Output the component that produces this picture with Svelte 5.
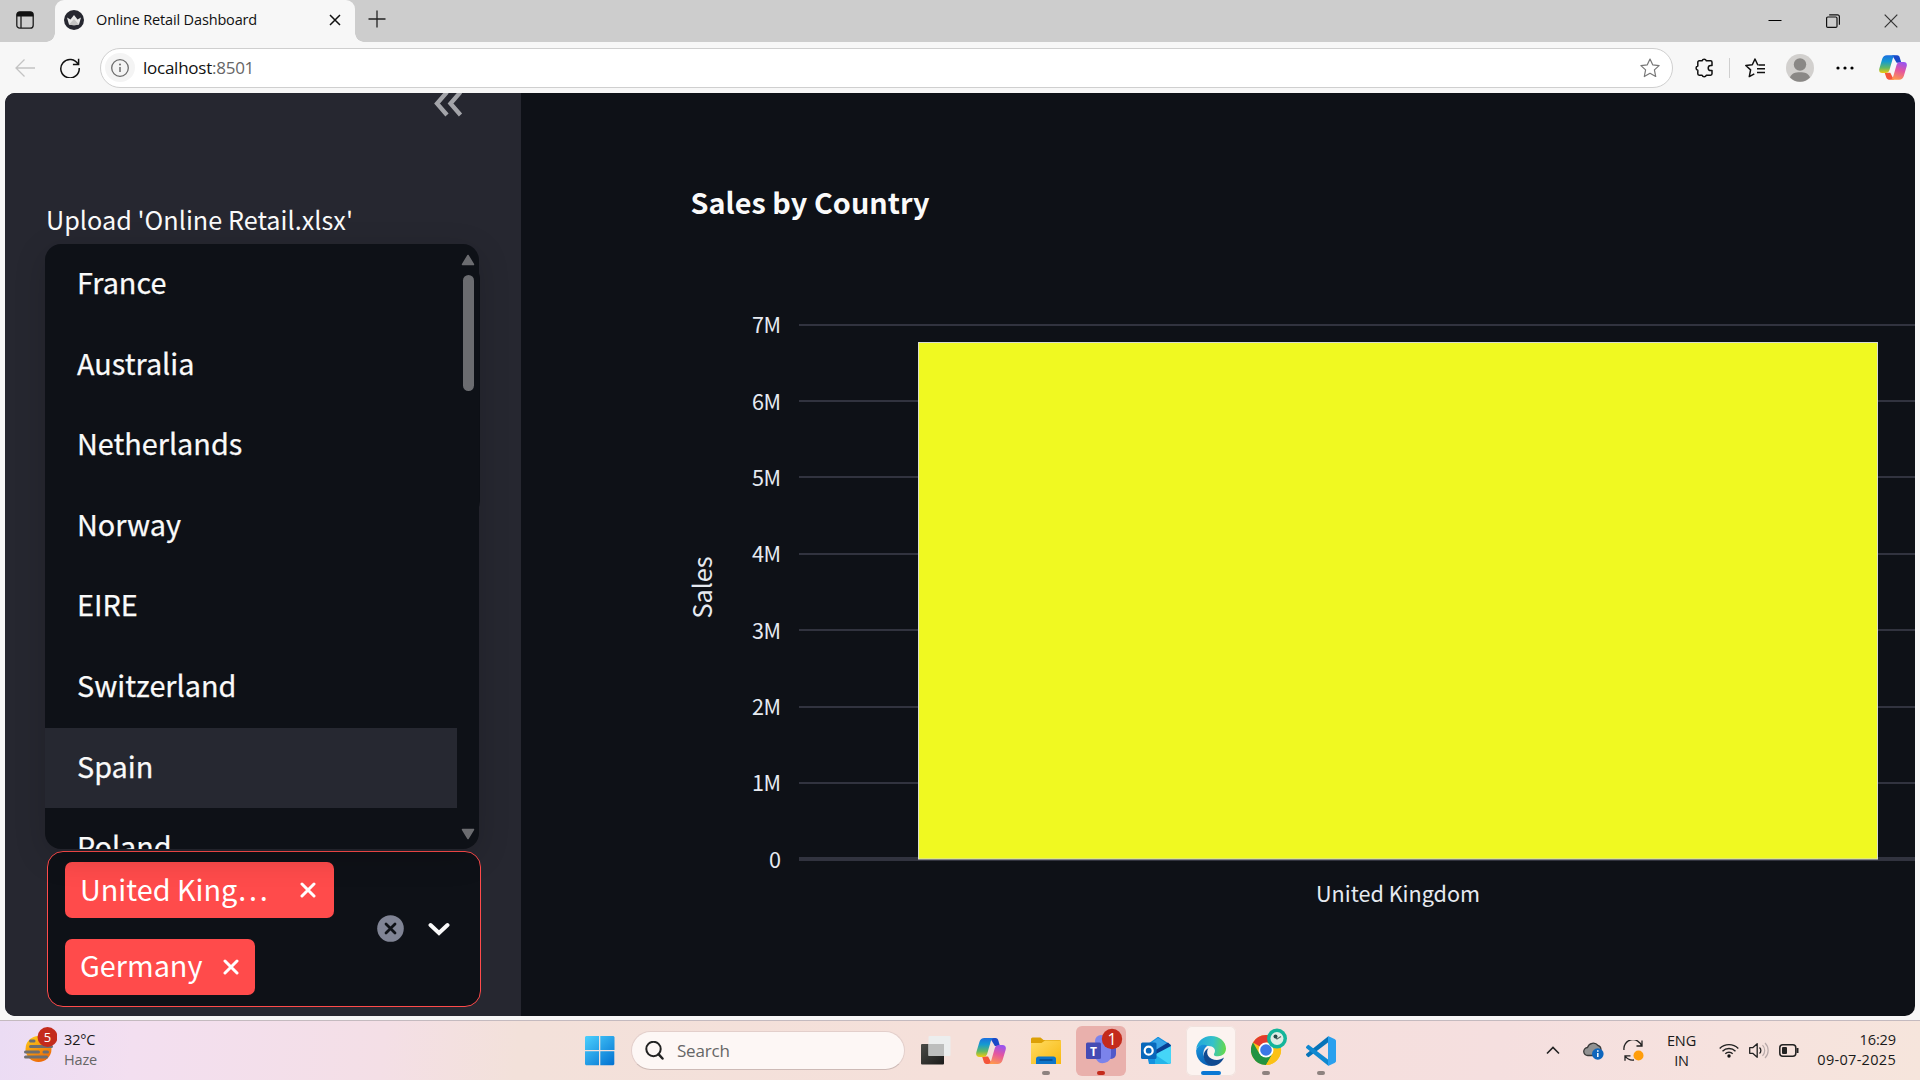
<script>
  const countries = ['France', 'Australia', 'Netherlands', 'Norway', 'EIRE', 'Switzerland', 'Spain', 'Poland'];
  const selected = [
    { name: 'United King…', wide: true },
    { name: 'Germany', wide: false }
  ];
  const ticks = [
    { label: '7M', y: 232, base: 240 },
    { label: '6M', y: 308, base: 317 },
    { label: '5M', y: 384, base: 393 },
    { label: '4M', y: 461, base: 469 },
    { label: '3M', y: 537, base: 546 },
    { label: '2M', y: 614, base: 622 },
    { label: '1M', y: 690, base: 698 }
  ];
</script>

{#snippet copilot(id)}
  <svg class="copilot" viewBox="0 0 30 28">
    <defs>
      <linearGradient id="{id}a" x1="0" y1="0" x2="0" y2="1">
        <stop offset="0" stop-color="#1b6fe0" /><stop offset=".35" stop-color="#159bd0" />
        <stop offset=".7" stop-color="#62b865" /><stop offset="1" stop-color="#f3cb0e" />
      </linearGradient>
      <linearGradient id="{id}b" x1=".6" y1="0" x2=".3" y2="1">
        <stop offset="0" stop-color="#9a55ee" /><stop offset=".45" stop-color="#e455a0" />
        <stop offset="1" stop-color="#ff9a4c" />
      </linearGradient>
    </defs>
    <path d="M14 1h5.500c1.600 0 2.400 1 2.900 2.700l1.500 5.300h-5z" fill="#1a49c8" />
    <path d="M16 27h-5.500c-1.600 0-2.400-1-2.900-2.700l-1.500-4.800h6z" fill="#f4553a" />
    <path d="M8.500 1h9.500c-2 .5-2.800 2-3.400 4l-3.300 11.500c-.7 2.500-2 3.500-4.500 3.500h-3.300c-3 0-3.900-2.300-3.100-5l3-10c.8-2.600 2.400-4 5.100-4z" fill="url(#{id}a)" />
    <path d="M21.500 27h-9.500c2-.5 2.800-2 3.400-4l3.300-11.500c.7-2.500 2-3.500 4.500-3.500h3.300c3 0 3.900 2.300 3.100 5l-3 10c-.8 2.600-2.400 4-5.100 4z" fill="url(#{id}b)" />
  </svg>
{/snippet}

<div class="screen">
  <header class="titlebar">
    <div class="workspace">
      <svg width="18" height="18" viewBox="0 0 18 18">
        <rect x=".8" y=".8" width="16.400" height="16.400" rx="3" fill="none" stroke="#1b1b1b" stroke-width="1.300" />
        <path d="M.8 5.500V4a3.200 3.200 0 0 1 3.200-3.200h10A3.200 3.200 0 0 1 17.200 4v1.500z" fill="#111" />
        <path d="M5 5v12" stroke="#1b1b1b" stroke-width="1.300" />
      </svg>
    </div>
    <div class="tab">
      <svg class="favicon" width="20" height="20" viewBox="0 0 20 20">
        <circle cx="10" cy="10" r="10" fill="#262730" />
        <path d="M3 7.500l3.500 2L10 5l3.500 4.500 3.500-2-2 7c-3 1-7 1-10 0z" fill="#e8e8e8" />
        <path d="M5 14.500L10 9l5 5.500c-3 1-7 1-10 0z" fill="#c4c4c4" />
      </svg>
      <span class="tab-title">Online Retail Dashboard</span>
      <svg width="12" height="12" viewBox="0 0 12 12"><path d="M1 1l10 10M11 1L1 11" stroke="#111" stroke-width="1.500" /></svg>
    </div>
    <svg class="new-tab" width="18" height="18" viewBox="0 0 18 18"><path d="M9 .5v17M.5 9h17" stroke="#222" stroke-width="1.300" /></svg>
    <div class="window-buttons">
      <svg width="14" height="14" viewBox="0 0 14 14"><path d="M.5 6.500h13" stroke="#000" stroke-width="1" /></svg>
      <svg width="14" height="14" viewBox="0 0 14 14"><g fill="none" stroke="#111" stroke-width="1.200"><rect x=".6" y="3" width="10.400" height="10.400" rx="1.200" /><path d="M3.200 .8h8.300a1.900 1.900 0 0 1 1.900 1.900v8" /></g></svg>
      <svg width="14" height="14" viewBox="0 0 14 14"><path d="M.7 .7l12.600 12.600M13.300 .7L.7 13.300" stroke="#333" stroke-width="1.200" /></svg>
    </div>
  </header>

  <nav class="toolbar">
    <svg class="back" width="20" height="20" viewBox="0 0 20 20"><path d="M20 10H1M9.500 1.500L1 10l8.500 8.500" fill="none" stroke="#c3c3c3" stroke-width="1.300" /></svg>
    <svg class="reload" width="20" height="20" viewBox="0 0 20 20"><path d="M18.200 6.500A9.200 9.200 0 1 0 19.200 10M18.600 .8v5.700h-5.700" fill="none" stroke="#111" stroke-width="1.500" /></svg>
    <div class="address">
      <div class="site-info">
        <svg width="18" height="18" viewBox="0 0 18 18"><circle cx="9" cy="9" r="8.300" fill="none" stroke="#6c6c6c" stroke-width="1.300" /><path d="M9 8v5" stroke="#6c6c6c" stroke-width="1.500" /><circle cx="9" cy="5.400" r="1" fill="#6c6c6c" /></svg>
      </div>
      <span class="url">localhost<i>:8501</i></span>
      <svg class="star" width="20" height="20" viewBox="0 0 20 20"><path d="M10 1l2.700 5.800 6.400.8-4.700 4.300 1.300 6.600L10 15.300l-5.700 3.200 1.300-6.600L.9 7.600l6.400-.8z" fill="none" stroke="#777" stroke-width="1.200" stroke-linejoin="round" /></svg>
    </div>
    <div class="actions">
      <svg class="puzzle" width="20" height="20" viewBox="0 0 20 20"><path d="M5.200 2.800h2.900a2.200 2.200 0 0 1 4.200 0h4.300a1.400 1.400 0 0 1 1.400 1.400v3.200h-1.200a2.600 2.600 0 0 0 0 5.200h1.200v3.200a1.400 1.400 0 0 1-1.400 1.400h-4.300a2.200 2.200 0 0 1-4.200 0H5.200a1.400 1.400 0 0 1-1.400-1.400v-3.600a2.200 2.200 0 0 1 0-4.300V4.200a1.400 1.400 0 0 1 1.400-1.400z" fill="none" stroke="#111" stroke-width="1.500" stroke-linejoin="round" /></svg>
      <span class="divider"></span>
      <svg class="favorites" width="20" height="20" viewBox="0 0 20 20"><path d="M13.300 6.800l-.6-.1L10 1 7.300 6.700l-6.500.8 4.800 4.400-1.300 6.700 5-2.700M13.500 7H20M12 10.800h8M12 14.500h8" fill="none" stroke="#111" stroke-width="1.500" stroke-linejoin="round" /></svg>
      <svg class="avatar" width="28" height="28" viewBox="0 0 28 28"><circle cx="14" cy="14" r="14" fill="#d2d0ce" /><circle cx="14" cy="10.500" r="6.200" fill="#8a8886" /><path d="M4 23.500C5.500 19.500 9 18.300 14 18.300s8.500 1.200 10 5.200A14 14 0 0 1 4 23.500z" fill="#8a8886" /></svg>
      <svg class="more" width="18" height="4" viewBox="0 0 18 4"><circle cx="2" cy="2" r="1.600" /><circle cx="9" cy="2" r="1.600" /><circle cx="16" cy="2" r="1.600" /></svg>
      {@render copilot('bar')}
    </div>
  </nav>

  <main class="viewport">
    <aside class="sidebar">
      <svg class="collapse" width="29" height="24" viewBox="0 0 29 24"><path d="M13 -1L3 10.500 13 22M26.500 -1L16.500 10.500 26.500 22" fill="none" stroke="#a3a4a9" stroke-width="4.300" /></svg>
      <p class="upload-label">Upload 'Online Retail.xlsx'</p>
      <div class="uploader">
        <div class="menu">
          <ul>
            {#each countries as country}
              <li class:hovered={country === 'Spain'}>{country}</li>
            {/each}
          </ul>
          <div class="scrollbar">
            <svg width="14" height="12" viewBox="0 0 14 12"><path d="M7 1.500L12.500 10.500h-11z" fill="#6b6c70" stroke="#6b6c70" stroke-width="1.500" stroke-linejoin="round" /></svg>
            <span class="thumb"></span>
            <svg class="down" width="14" height="12" viewBox="0 0 14 12"><path d="M7 10.500L12.500 1.500h-11z" fill="#6b6c70" stroke="#6b6c70" stroke-width="1.500" stroke-linejoin="round" /></svg>
          </div>
        </div>
      </div>
      <div class="multiselect">
        <div class="tags">
          {#each selected as tag}
            <span class="tag" class:wide={tag.wide}>
              <span>{tag.name}</span>
              <svg width="16" height="16" viewBox="0 0 16 16"><path d="M2 2l12 12M14 2L2 14" stroke="#fff" stroke-width="3" stroke-linecap="round" /></svg>
            </span>
          {/each}
        </div>
        <svg class="clear" width="27" height="27" viewBox="0 0 27 27"><circle cx="13.500" cy="13.500" r="13.300" fill="#808495" /><path d="M9 9l9 9M18 9l-9 9" stroke="#0e1117" stroke-width="2.800" stroke-linecap="round" /></svg>
        <svg class="chevron" width="22" height="14" viewBox="0 0 22 14"><path d="M2.500 3L11 11l8.500-8" fill="none" stroke="#fafafa" stroke-width="4" stroke-linecap="round" /></svg>
      </div>
    </aside>

    <section class="chart">
      <svg width="1394" height="923" viewBox="0 0 1394 923">
        <text class="title" x="169.500" y="121" textLength="239">Sales by Country</text>
        {#each ticks as tick}
          <text class="tick" x="260" y={tick.base} text-anchor="end" textLength="29">{tick.label}</text>
          <rect x="278" y={tick.y - 1} width="1116" height="2" fill="#31333f" />
        {/each}
        <text class="tick" x="260" y="775" text-anchor="end">0</text>
        <rect x="278" y="764" width="1116" height="4" fill="#31333f" />
        <rect x="397.500" y="249.500" width="959" height="516.500" fill="#f0f921" stroke="#d9dccf" stroke-width="1" />
        <text class="axis" transform="translate(190.500 525.500) rotate(-90)" textLength="62">Sales</text>
        <text class="tick" x="795" y="809" textLength="164">United Kingdom</text>
      </svg>
    </section>
  </main>

  <footer class="taskbar">
    <div class="weather">
      <svg width="34" height="38" viewBox="0 0 34 38">
        <defs><linearGradient id="sun" x1="0" y1="0" x2=".5" y2="1"><stop offset="0" stop-color="#ffd21a" /><stop offset="1" stop-color="#ee6c08" /></linearGradient></defs>
        <circle cx="15.500" cy="22" r="13" fill="url(#sun)" />
        <path d="M7.500 14h3.500M7.500 19.500h21M2.500 25h13M21 25h3.500M2.500 30h21" stroke="#6e6e70" stroke-width="3" stroke-linecap="round" />
        <circle cx="24.500" cy="10" r="10" fill="#c42b1c" />
        <text x="24.500" y="14.700" text-anchor="middle" class="badge">5</text>
      </svg>
      <div class="weather-text"><span>32°C</span><span class="muted">Haze</span></div>
    </div>

    <div class="apps">
      <svg class="start" width="30" height="30" viewBox="0 0 30 30">
        <defs><linearGradient id="win" gradientUnits="userSpaceOnUse" x1="0" y1="0" x2="26" y2="30"><stop offset="0" stop-color="#4cd0fd" /><stop offset="1" stop-color="#0474d2" /></linearGradient></defs>
        <path d="M1 0h13v14H0V1zM15.300 0H28.500l1 1v13H15.300zM0 15.300h14v14H1l-1-1zM15.300 15.300h14v13l-1 1h-13z" fill="url(#win)" />
      </svg>
      <div class="search">
        <svg width="19" height="19" viewBox="0 0 19 19"><circle cx="8.500" cy="8" r="7.200" fill="none" stroke="#222" stroke-width="2" /><path d="M13.500 13.200l4 4.300" stroke="#222" stroke-width="2.500" stroke-linecap="round" /></svg>
        <span>Search</span>
      </div>
      <div class="icons">
        <div class="app">
          <svg width="30" height="30" viewBox="0 0 30 30">
            <defs><linearGradient id="tv" x1="0" y1="0" x2="1" y2="1"><stop offset="0" stop-color="#4b4b46" /><stop offset="1" stop-color="#1b1b1a" /></linearGradient></defs>
            <rect x="0" y="8" width="23" height="20.500" rx="1" fill="url(#tv)" /><rect x="7.500" y="0" width="22" height="20" rx="1" fill="#eceeee" /><path d="M7.500 8H23v12H7.500z" fill="#bdbebd" />
          </svg>
        </div>
        <div class="app">{@render copilot('task')}</div>
        <div class="app running">
          <svg width="30" height="28" viewBox="0 0 30 28">
            <defs><linearGradient id="fold" x1="0" y1="0" x2="1" y2="1"><stop offset="0" stop-color="#ffdc62" /><stop offset="1" stop-color="#f8b80f" /></linearGradient></defs>
            <path d="M0 2a1.500 1.500 0 0 1 1.500-1.500h8L12.500 3H28.500A1.500 1.500 0 0 1 30 4.500V12H0z" fill="#dca006" />
            <path d="M0 6h10.500L14 3.500h16V27H0z" fill="url(#fold)" />
            <path d="M5 27v-5a2.500 2.500 0 0 1 2.500-2.500h15A2.500 2.500 0 0 1 25 22v5z" fill="#0d75c9" /><path d="M8.500 23h13" stroke="#064a8b" stroke-width="1.500" />
          </svg>
        </div>
        <div class="app running alert">
          <svg class="teams" width="38" height="38" viewBox="0 0 38 38">
            <circle cx="16" cy="13" r="6" fill="#7b83eb" /><rect x="21" y="15" width="10" height="16" rx="5" fill="#5059c9" />
            <path d="M10 15h16v12a8 8 0 0 1-15 4z" fill="#7b83eb" /><rect x="1" y="14.500" width="15" height="16.500" rx="1.500" fill="#454bb4" />
            <text x="8.500" y="27.500" text-anchor="middle" class="teams-letter">T</text>
            <circle cx="27" cy="11" r="10.200" fill="#c42b1c" /><text x="27" y="16.500" text-anchor="middle" class="badge one">1</text>
          </svg>
        </div>
        <div class="app">
          <svg width="30" height="28" viewBox="0 0 30 28">
            <path d="M4 9L16 .5c.8-.6 1.500-.6 2.300 0L30 8v17a2 2 0 0 1-2 2H8z" fill="#1491df" />
            <path d="M8 8L17 1l11 7-9 6z" fill="#38a5e8" /><path d="M13 14L27 5.500l3 3V11l-15 9z" fill="#093e92" />
            <path d="M14 17.500l16-8.500v15.500a2.500 2.500 0 0 1-2.500 2.500H14z" fill="#45d5f7" /><path d="M14 17.500L28 27H14z" fill="#24b5ea" />
            <rect x="0" y="5.500" width="15.500" height="16.500" rx="1.500" fill="#0868bb" /><circle cx="7.700" cy="13.700" r="4" fill="none" stroke="#fff" stroke-width="2.200" />
          </svg>
        </div>
        <div class="app running active">
          <svg width="30" height="30" viewBox="0 0 30 30">
            <defs>
              <linearGradient id="e1" x1="0" y1=".4" x2="1" y2=".5"><stop offset="0" stop-color="#20a6dd" /><stop offset=".55" stop-color="#35c1ca" /><stop offset="1" stop-color="#65d94b" /></linearGradient>
              <linearGradient id="e2" x1="0" y1="0" x2=".4" y2="1"><stop offset="0" stop-color="#1a9ae0" /><stop offset="1" stop-color="#0a5fb4" /></linearGradient>
            </defs>
            <path d="M.2 13.500C1 5.500 7.200 0 15 0c8.800 0 15 6 15 12.600 0 5-3.900 7.700-7.900 7.700-3.200 0-4.800-1.100-4.100-2.400 3-4.500-1-7.900-5.500-7.900C7.500 8.500 2 9.500.2 13.500z" fill="url(#e1)" />
            <path d="M.1 14.500C1.500 9 7 7.500 12 9.500c-3 1.500-5 5-4.500 9 .6 5 4.500 10 10.500 11.200C8.500 31 0 24.500.1 14.500z" fill="url(#e2)" />
            <path d="M12.500 12c-2.500 3.500-1.500 8.500 3 10.700 4.500 2.100 8.800 1.500 12.500-1.200-2 5-7 8.800-12.500 8.300C6.500 27 5 15.500 12.500 12z" fill="#104a91" />
          </svg>
        </div>
        <div class="app running">
          <svg class="chrome" width="38" height="38" viewBox="0 0 38 38">
            <circle cx="15" cy="22" r="15" fill="#fbc116" />
            <path d="M15 22L2 14.500a15 15 0 0 1 26 0L15 14.500z" fill="#e33b2e" />
            <path d="M2 14.500A15 15 0 0 0 15 37l6.500-11.200L15 22l-6.500 3.800z" fill="#229342" />
            <path d="M28 14.500A15 15 0 0 1 15 37l6.500-11.200c1.500-3 1-8-2-11.300z" fill="#fbc116" />
            <circle cx="15" cy="22" r="7.500" fill="#fff" /><circle cx="15" cy="22" r="5.800" fill="#3b78e7" />
            <circle cx="26" cy="10.500" r="10" fill="#13b59a" /><circle cx="26" cy="10.500" r="6.500" fill="#dfece5" /><path d="M23.500 8l2.500 3 4-2.500" fill="none" stroke="#5a6b69" stroke-width="1.300" /><circle cx="24.500" cy="8.500" r="2" fill="#274b49" />
          </svg>
        </div>
        <div class="app running">
          <svg width="30" height="30" viewBox="0 0 30 30">
            <path d="M22 6.500L3.200 20.800a1.200 1.200 0 0 1-1.600 0L.4 19.600a1.200 1.200 0 0 1 0-1.800L22 .5z" fill="#0673b8" />
            <path d="M22 23.500L3.200 9.200a1.200 1.200 0 0 0-1.600 0L.4 10.400a1.200 1.200 0 0 0 0 1.800L22 29.500z" fill="#0f88d0" />
            <path d="M22 0l6.500 3c1 .5 1.500 1.200 1.500 2.200v19.600c0 1-.5 1.700-1.500 2.200l-6.500 3z" fill="#2aa0ee" />
          </svg>
        </div>
      </div>
    </div>

    <div class="tray">
      <svg class="up" width="14" height="9" viewBox="0 0 14 9"><path d="M1 7.500l6-6 6 6" fill="none" stroke="#222" stroke-width="1.600" /></svg>
      <svg class="cloud" width="21" height="18" viewBox="0 0 21 18"><path d="M5 13.500a4 4 0 0 1-.5-8A6 6 0 0 1 15 3.500c2 .5 3 2.500 3 4.500l-6 5.500z" fill="#929292" stroke="#3a3a3a" stroke-width="1.300" /><circle cx="14.800" cy="12" r="5.800" fill="#0f66bd" /><path d="M14.800 11v4M14.800 8.200v1.500" stroke="#fff" stroke-width="1.500" /></svg>
      <svg class="sync" width="21" height="21" viewBox="0 0 21 21"><path d="M1 10A9 9 0 0 1 18.500 6M19 .5V6h-5.500M7.500 15.800H2v5M2.200 16A9 9 0 0 0 11 20" fill="none" stroke="#222" stroke-width="1.300" /><circle cx="15.500" cy="15.500" r="5" fill="#ff9d0a" /></svg>
      <div class="lang"><span>ENG</span><span>IN</span></div>
      <svg class="wifi" width="20" height="15" viewBox="0 0 20 15"><path d="M.7 5.500a13 13 0 0 1 18.600 0M3.500 8.200a9.200 9.200 0 0 1 13 0M6.300 10.800a5.300 5.300 0 0 1 7.400 0" fill="none" stroke="#222" stroke-width="1.400" /><circle cx="10" cy="13" r="1.700" fill="#111" /></svg>
      <svg class="speaker" width="20" height="17" viewBox="0 0 20 17"><path d="M.7 5.700h3l4.500-4v13.600l-4.500-4h-3zM10.500 5.500a4 4 0 0 1 0 6" fill="none" stroke="#222" stroke-width="1.300" stroke-linejoin="round" /><path d="M13.500 3.200a7.500 7.500 0 0 1 0 10.600M16 1a10.500 10.500 0 0 1 0 15" fill="none" stroke="#b9abab" stroke-width="1.200" /></svg>
      <svg class="battery" width="20" height="13" viewBox="0 0 20 13"><rect x=".8" y=".8" width="16" height="11.400" rx="3" fill="none" stroke="#222" stroke-width="1.500" /><rect x="3" y="3" width="5" height="7" rx="1" fill="#222" /><path d="M18.500 4v5" stroke="#222" stroke-width="2" /></svg>
      <div class="clock"><span class="time">16:29</span><span class="date">09-07-2025</span></div>
    </div>
  </footer>
</div>

<style>
  :global(body) { margin: 0; }
  svg { display: block; flex: none; }
  .screen {
    width: 1920px; height: 1080px; overflow: hidden; display: flex; flex-direction: column;
    background: #f7f7f7; font-family: "Open Sans", "Noto Sans", sans-serif; color: #1a1a1a;
  }

  .titlebar { height: 42px; flex: none; display: flex; align-items: flex-start; background: #cdcdcd; }
  .workspace { width: 39px; height: 31px; padding: 11px 0 0 16px; }
  .tab {
    position: relative; box-sizing: border-box; width: 300px; height: 42px; padding: 0 14px 3px 9px; border-radius: 9px 9px 0 0;
    display: flex; align-items: center; background: #f7f7f7; gap: 12px;
  }
  .tab::before, .tab::after { content: ""; position: absolute; bottom: 0; width: 9px; height: 9px; }
  .tab::before { left: -9px; background: radial-gradient(circle at 0 0, #cdcdcd 8.500px, #f7f7f7 9px); }
  .tab::after { right: -9px; background: radial-gradient(circle at 100% 0, #cdcdcd 8.500px, #f7f7f7 9px); }
  .tab-title { flex: 1; font-size: 14.500px; letter-spacing: -0.150px; white-space: nowrap; color: #111; }
  .new-tab { margin: 10px 0 0 13px; }
  .window-buttons { margin-left: auto; display: flex; gap: 44px; padding: 14px 22px 0 0; }

  .toolbar { height: 51px; flex: none; display: flex; align-items: center; padding-left: 15px; box-sizing: border-box; }
  .reload { margin-left: 25px; }
  .address {
    margin-left: 20px; width: 1573px; height: 40px; box-sizing: border-box; border: 1px solid #cfcfcf; border-radius: 20px;
    background: #fff; display: flex; align-items: center; padding: 0 12px 0 4px;
  }
  .site-info { width: 30px; height: 29px; border-radius: 50%; background: #f4f4f4; display: grid; place-items: center; }
  .url { margin-left: 8px; flex: 1; font-size: 17px; letter-spacing: -0.250px; color: #111; }
  .url i { font-style: normal; color: #666; }
  .actions { display: flex; align-items: center; }
  .puzzle { margin-left: 21px; }
  .divider { width: 1px; height: 20px; background: #cfcfcf; margin-left: 15px; }
  .favorites { margin-left: 15px; }
  .avatar { margin-left: 21px; }
  .more { margin-left: 22px; }
  .actions .copilot { margin-left: 25px; width: 28px; height: 27px; }

  .viewport {
    flex: none; width: 1910px; height: 923px; margin-left: 5px; border-radius: 10px; overflow: hidden;
    display: flex; background: #0e1117; font-family: "Noto Sans CJK SC", sans-serif;
  }
  .sidebar { width: 516px; flex: none; background: #262730; box-sizing: border-box; padding: 0 40px 0 41px; display: flex; flex-direction: column; }
  .collapse { align-self: flex-end; margin-right: 18px; }
  .upload-label { margin: 84px 0 0; height: 36px; line-height: 36px; font-size: 25.200px; letter-spacing: 0.040px; color: #fafafa; white-space: nowrap; }
  .uploader { height: 254px; margin: 26px 1px 0 1px; border-radius: 16px; background: #0e1117; position: relative; }
  .menu {
    position: absolute; left: -2px; top: -19px; width: 434px; height: 605px; border-radius: 16px; overflow: hidden;
    background: #0e1117; box-shadow: 0 8px 32px rgba(0, 0, 0, .16); display: flex;
  }
  ul { margin: 0; padding: 0; list-style: none; width: 412px; }
  li { height: 80.600px; line-height: 75px; padding-left: 32px; font-size: 28.800px; color: #fafafa; -webkit-text-stroke: 0.250px #fafafa; }
  .hovered { background: #262831; }
  .scrollbar { flex: 1; display: flex; flex-direction: column; align-items: center; padding: 10px 0 9px 2px; margin-right: 2px; }
  .thumb { width: 11px; height: 116px; margin-top: 9px; border-radius: 6px; background: #6b6c70; }
  .down { margin-top: auto; }
  .multiselect {
    height: 156px; margin: 334px 0 0 1px; box-sizing: border-box; border: 1.500px solid #ff4b4b; border-radius: 16px;
    background: #0e1117; display: flex; align-items: center; padding: 0 0 1px 17px;
  }
  .tags { display: flex; flex-direction: column; align-items: flex-start; gap: 21px; width: 312px; }
  .tag {
    height: 56px; box-sizing: border-box; padding: 0 16px 0 15px; border-radius: 7px; background: #ff4b4b; color: #fff;
    font-size: 28.800px; line-height: 48px; display: flex; align-items: center; justify-content: space-between; width: 190px; white-space: nowrap;
  }
  .tag > span { padding-bottom: 5px; }
  .tag.wide > span { padding-bottom: 2px; }
  .tag.wide { width: 269px; padding-right: 18px; }
  .chevron { margin-left: 24px; }

  .chart { flex: 1; }
  .title { font-size: 28.800px; font-weight: 700; fill: #fafafa; }
  .tick { font-size: 21.600px; fill: #e6eaf1; }
  .axis { font-size: 25.200px; fill: #e6eaf1; }

  .taskbar {
    margin-top: 4px; height: 60px; box-sizing: border-box; border-top: 1px solid #c4babf; display: flex; align-items: center; justify-content: space-between;
    background: linear-gradient(95deg, #ebdcf4 0%, #f3dff0 7%, #f4dfe6 20%, #f3e1da 27%, #f5e0da 50%, #f5dfdf 78%, #f6e2de 90%, #f6e5dc 100%);
  }
  .weather { display: flex; align-items: center; padding-left: 23px; gap: 7px; width: 561px; box-sizing: border-box; }
  .weather svg { margin-top: -9px; }
  .weather-text, .lang, .clock { display: flex; flex-direction: column; font-size: 14.500px; line-height: 20px; letter-spacing: -0.150px; }
  .weather-text, .clock { margin-top: -1px; }
  .muted { color: #666; }
  .badge { font-size: 13px; fill: #fff; }
  .one { font-size: 16px; }
  .apps { display: flex; align-items: center; flex: 1; padding-left: 24px; }
  .search {
    margin-left: 16px; width: 274px; height: 39px; box-sizing: border-box; border: 1px solid #e3cfcb; border-bottom-color: #cdbab6; border-radius: 20px;
    background: #fdf7f5; display: flex; align-items: center; padding-left: 13px; gap: 13px; color: #666; font-size: 17px; letter-spacing: -0.200px;
  }
  .icons { display: flex; margin-left: 3px; }
  .app {
    position: relative; width: 50px; height: 50px; margin: 0 2.500px; border-radius: 6px; display: grid; place-items: center; box-sizing: border-box;
  }
  .app .copilot { width: 30px; height: 28px; }
  .running::after { content: ""; position: absolute; bottom: 1px; left: 21px; width: 8px; height: 4px; border-radius: 2px; background: #8d827f; }
  .alert { background: #e9b0ac; }
  .alert::after { background: #c42b1c; }
  .active { background: #fcf3f0; box-shadow: inset 0 0 0 1px #f1e2de; }
  .active::after { left: 15px; width: 20px; background: #0b78d4; }
  .teams { margin: -8px 0 0 6px; }
  .teams-letter { font-size: 12px; font-weight: 700; fill: #fff; }
  .chrome { margin: -8px 0 0 8px; }

  .tray { display: flex; align-items: center; padding-right: 24px; }
  .cloud { margin-left: 23px; }
  .sync { margin-left: 19px; }
  .lang { margin-left: 17px; align-items: center; width: 41px; }
  .wifi { margin-left: 17px; }
  .speaker { margin-left: 10px; }
  .battery { margin-left: 10px; }
  .clock { margin-left: 15px; width: 82px; align-items: flex-end; white-space: nowrap; }
  .time { letter-spacing: -0.100px; }
  .date { letter-spacing: 0.300px; }
</style>
